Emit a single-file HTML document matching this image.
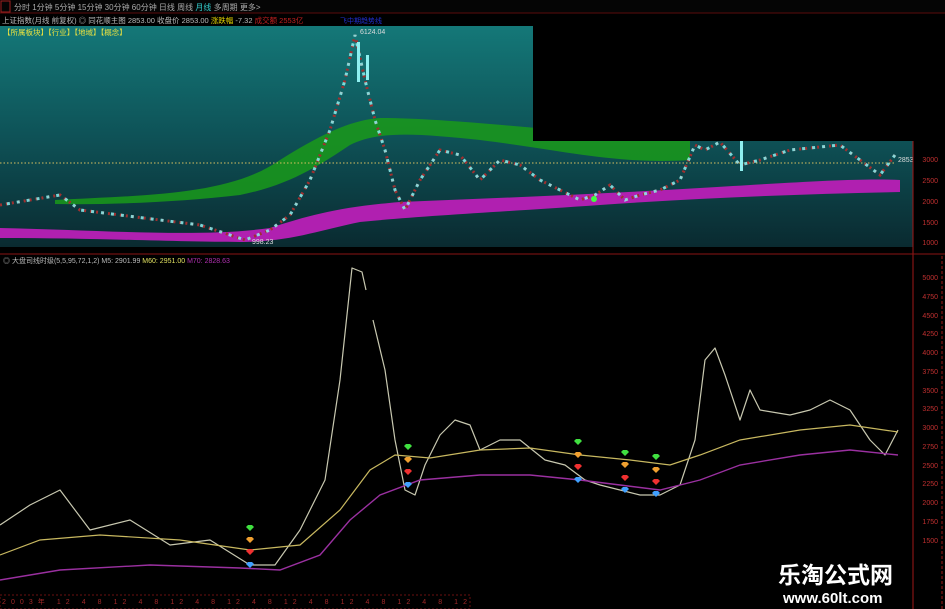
<!DOCTYPE html>
<html><head><meta charset="utf-8"><style>
html,body{margin:0;padding:0;background:#000;width:945px;height:609px;overflow:hidden}
svg{display:block}
text{font-family:"Liberation Sans","Noto Sans CJK SC",sans-serif}
</style></head><body>
<svg width="945" height="609" viewBox="0 0 945 609" xmlns="http://www.w3.org/2000/svg">
<defs>
<linearGradient id="tg" x1="0" y1="0" x2="0" y2="1">
<stop offset="0" stop-color="#147878"/><stop offset="0.5" stop-color="#0e5257"/><stop offset="1" stop-color="#0a2a30"/>
</linearGradient>
</defs>
<rect width="945" height="609" fill="#000"/>
<rect x="0" y="0" width="945" height="13" fill="#050505"/>
<rect x="1" y="1" width="9" height="11" fill="none" stroke="#a02020"/>
<text x="14" y="10" font-size="8" fill="#aaa">分时  1分钟  5分钟  15分钟  30分钟  60分钟  日线  周线  <tspan fill="#3cc">月线</tspan>  多周期  更多&gt;</text>
<line x1="0" y1="13" x2="945" y2="13" stroke="#5a0c0c"/>
<text x="2" y="23" font-size="7.5" fill="#bbb">上证指数(月线 前复权) ◎ 同花顺主图  2853.00    收盘价 2853.00 <tspan fill="#e0d000">涨跌幅</tspan> -7.32 <tspan fill="#c02020">成交额 2553亿</tspan></text>
<text x="340" y="23" font-size="7" fill="#2030d0">飞中期趋势线</text>
<rect x="0" y="26" width="913" height="221" fill="url(#tg)"/>
<text x="3" y="35" font-size="7.5" fill="#e8e040">【所属板块】【行业】【地域】【概念】</text>
<path d="M55,200 C150,195 230,195 280,160 C320,135 350,120 380,118 C450,118 540,130 690,140 L690,160 C620,165 560,150 480,140 C420,134 380,130 350,145 C320,165 290,185 240,195 C180,202 110,205 55,204 Z" fill="#1a9a1a" opacity="0.85"/>
<rect x="533" y="26" width="412" height="115" fill="#000"/>
<path d="M0,228 C100,230 200,238 270,228 C310,215 340,207 400,202 C500,198 600,194 700,188 C800,182 860,178 900,180 L900,192 C800,194 700,198 600,205 C500,212 420,216 360,222 C320,230 290,242 240,242 C180,242 100,238 0,238 Z" fill="#b020b0"/>
<line x1="0" y1="163" x2="895" y2="163" stroke="#d8c060" stroke-width="1" stroke-dasharray="1.5,2"/>
<polyline fill="none" stroke="#a03030" stroke-width="3" stroke-dasharray="2,4" points="0,205 30,200 60,195 80,210 120,215 160,220 200,225 245,240 270,230 290,215 310,180 330,130 345,80 355,35 365,80 375,120 385,150 395,190 405,210 420,180 440,150 460,155 480,180 500,160 520,165 540,180 560,190 580,200 595,195 610,185 625,200 640,195 660,190 680,180 695,145 705,150 720,142 740,165 760,160 790,150 820,147 840,145 860,160 880,175 895,155"/>
<polyline fill="none" stroke="#8ff0f0" stroke-width="3" stroke-dasharray="3,7" stroke-dashoffset="3" opacity="0.85" points="0,205 30,200 60,195 80,210 120,215 160,220 200,225 245,240 270,230 290,215 310,180 330,130 345,80 355,35 365,80 375,120 385,150 395,190 405,210 420,180 440,150 460,155 480,180 500,160 520,165 540,180 560,190 580,200 595,195 610,185 625,200 640,195 660,190 680,180 695,145 705,150 720,142 740,165 760,160 790,150 820,147 840,145 860,160 880,175 895,155"/>
<rect x="357" y="42" width="3" height="40" fill="#8ff0f0"/>
<rect x="366" y="55" width="3" height="25" fill="#8ff0f0"/>
<rect x="740" y="141" width="3" height="30" fill="#8ff0f0"/>
<circle cx="594" cy="199" r="3" fill="#40ff40"/>
<text x="360" y="34" font-size="7" fill="#ddd">6124.04</text>
<text x="252" y="244" font-size="7" fill="#ddd">998.23</text>
<text x="898" y="162" font-size="7" fill="#ddd">2853</text>
<line x1="913" y1="141" x2="913" y2="609" stroke="#a01818"/>
<g font-size="7" fill="#c03030" text-anchor="end"><text x="938" y="162">3000</text><text x="938" y="183">2500</text><text x="938" y="204">2000</text><text x="938" y="225">1500</text><text x="938" y="245">1000</text></g>
<line x1="0" y1="254" x2="945" y2="254" stroke="#8a1515"/>
<text x="3" y="263" font-size="7" fill="#bbb">◎ 大盘司线时级(5,5,95,72,1,2) M5: 2901.99 <tspan fill="#e0e060">M60: 2951.00</tspan> <tspan fill="#b030b0">M70: 2828.63</tspan></text>
<g font-size="7" fill="#c03030" text-anchor="end">
<text x="938" y="280">5000</text><text x="938" y="299">4750</text><text x="938" y="318">4500</text><text x="938" y="336">4250</text><text x="938" y="355">4000</text><text x="938" y="374">3750</text><text x="938" y="393">3500</text><text x="938" y="411">3250</text><text x="938" y="430">3000</text><text x="938" y="449">2750</text><text x="938" y="468">2500</text><text x="938" y="486">2250</text><text x="938" y="505">2000</text><text x="938" y="524">1750</text><text x="938" y="543">1500</text>
</g>
<line x1="942" y1="256" x2="942" y2="609" stroke="#a01818" stroke-dasharray="3,2"/>
<polyline fill="none" stroke="#c8c8b0" stroke-width="1.2" stroke-linejoin="round" points="0,525 30,505 60,490 90,530 130,520 170,545 210,540 250,565 275,565 300,530 325,480 340,380 352,268 362,272 366,290"/>
<polyline fill="none" stroke="#c8c8b0" stroke-width="1.2" stroke-linejoin="round" points="373,320 385,370 395,440 405,490 415,495 425,465 440,435 455,420 470,425 480,450 500,440 520,440 545,460 565,465 585,480 600,485 620,490 640,495 660,495 680,485 695,440 705,360 715,348 725,375 740,420 750,390 760,410 790,415 810,410 830,400 850,410 870,440 885,455 898,430"/>
<polyline fill="none" stroke="#c8b860" stroke-width="1.2" points="0,555 40,540 100,535 180,540 250,550 300,545 340,510 370,470 395,455 430,458 480,450 530,448 580,455 630,460 670,465 700,455 740,440 800,430 850,425 898,432"/>
<polyline fill="none" stroke="#9a30a0" stroke-width="1.4" points="0,580 60,570 150,565 240,568 280,570 320,555 350,520 380,495 420,480 480,475 530,475 580,480 620,485 660,490 700,480 740,465 800,455 850,450 898,455"/>
<g>
<g transform="translate(250,528)"><path d="M-4,-1 L-2,-3 L2,-3 L4,-1 L0,3 Z" fill="#40e040"/></g>
<g transform="translate(250,540)"><path d="M-4,-1 L-2,-3 L2,-3 L4,-1 L0,3 Z" fill="#f0a030"/></g>
<g transform="translate(250,552)"><path d="M-4,-1 L-2,-3 L2,-3 L4,-1 L0,3 Z" fill="#f03030"/></g>
<g transform="translate(250,565)"><path d="M-4,-1 L-2,-3 L2,-3 L4,-1 L0,3 Z" fill="#40a0ff"/></g>
<g transform="translate(408,447)"><path d="M-4,-1 L-2,-3 L2,-3 L4,-1 L0,3 Z" fill="#40e040"/></g>
<g transform="translate(408,460)"><path d="M-4,-1 L-2,-3 L2,-3 L4,-1 L0,3 Z" fill="#f0a030"/></g>
<g transform="translate(408,472)"><path d="M-4,-1 L-2,-3 L2,-3 L4,-1 L0,3 Z" fill="#f03030"/></g>
<g transform="translate(408,485)"><path d="M-4,-1 L-2,-3 L2,-3 L4,-1 L0,3 Z" fill="#40a0ff"/></g>
<g transform="translate(578,442)"><path d="M-4,-1 L-2,-3 L2,-3 L4,-1 L0,3 Z" fill="#40e040"/></g>
<g transform="translate(578,455)"><path d="M-4,-1 L-2,-3 L2,-3 L4,-1 L0,3 Z" fill="#f0a030"/></g>
<g transform="translate(578,467)"><path d="M-4,-1 L-2,-3 L2,-3 L4,-1 L0,3 Z" fill="#f03030"/></g>
<g transform="translate(578,480)"><path d="M-4,-1 L-2,-3 L2,-3 L4,-1 L0,3 Z" fill="#40a0ff"/></g>
<g transform="translate(625,453)"><path d="M-4,-1 L-2,-3 L2,-3 L4,-1 L0,3 Z" fill="#40e040"/></g>
<g transform="translate(625,465)"><path d="M-4,-1 L-2,-3 L2,-3 L4,-1 L0,3 Z" fill="#f0a030"/></g>
<g transform="translate(625,478)"><path d="M-4,-1 L-2,-3 L2,-3 L4,-1 L0,3 Z" fill="#f03030"/></g>
<g transform="translate(625,490)"><path d="M-4,-1 L-2,-3 L2,-3 L4,-1 L0,3 Z" fill="#40a0ff"/></g>
<g transform="translate(656,457)"><path d="M-4,-1 L-2,-3 L2,-3 L4,-1 L0,3 Z" fill="#40e040"/></g>
<g transform="translate(656,470)"><path d="M-4,-1 L-2,-3 L2,-3 L4,-1 L0,3 Z" fill="#f0a030"/></g>
<g transform="translate(656,482)"><path d="M-4,-1 L-2,-3 L2,-3 L4,-1 L0,3 Z" fill="#f03030"/></g>
<g transform="translate(656,494)"><path d="M-4,-1 L-2,-3 L2,-3 L4,-1 L0,3 Z" fill="#40a0ff"/></g>
</g>
<rect x="0" y="595" width="470" height="14" fill="none" stroke="#6a1010" stroke-dasharray="2,2"/>
<text x="2" y="604" font-size="7" fill="#a02828" textLength="465">2003年   12   4    8    12   4    8    12   4    8    12   4    8    12   4    8    12   4    8    12   4    8    12</text>
<text x="778" y="583" font-size="23" font-weight="bold" fill="#fff" font-family="'Noto Serif CJK SC','Noto Sans CJK SC',serif">乐淘公式网</text>
<text x="783" y="603" font-size="15" font-weight="bold" fill="#fff" font-family="'Liberation Serif',serif">www.60lt.com</text>
</svg>
</body></html>
